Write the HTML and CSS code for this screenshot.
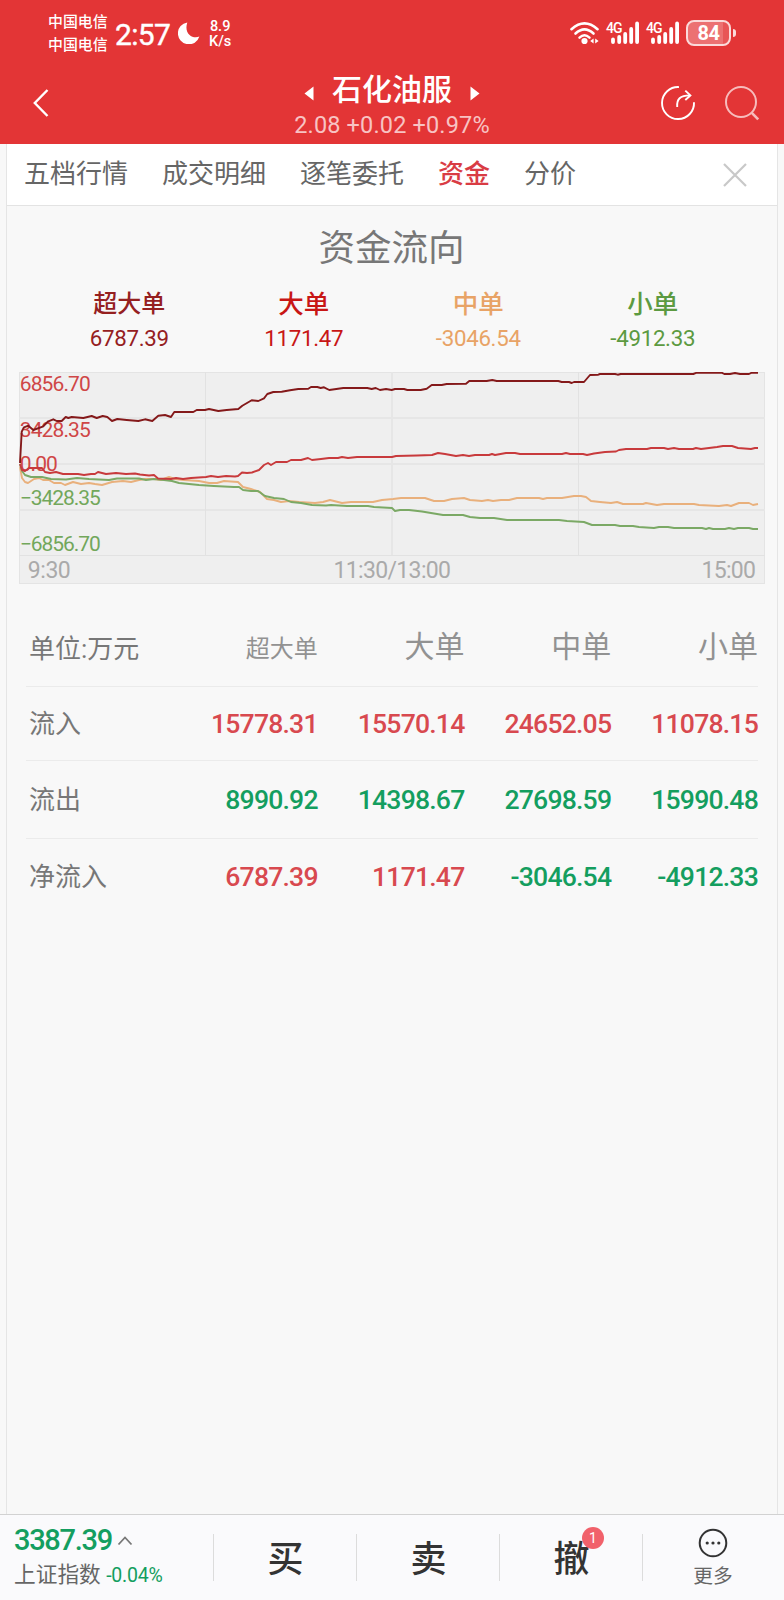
FILE: index.html
```html
<!DOCTYPE html>
<html lang="zh-CN">
<head>
  <meta charset="UTF-8">
  <title>石化油服 | 资金流向</title>
  <meta name="viewport" content="width=device-width, initial-scale=1.0">
  <link rel="stylesheet" href="styles.css">
</head>

<body>

<header>
  <div class="status-bar">
    <div class="carriers"><span>中国电信</span><span>中国电信</span></div>
    <div class="clock">2:57</div>
    <svg class="moon" width="22" height="22" viewBox="0 0 22 22"><path d="M9.3 0.4 A11 11 0 1 0 21.4 14.6 C15 17.5 5.5 12 9.3 0.4Z" fill="#fff"/></svg>
    <div class="net-speed"><span>8.9</span><span>K/s</span></div>

    <div class="status-right">
      <svg width="32" height="24" viewBox="0 0 32 24" fill="none" stroke="#fff" stroke-linecap="round">
        <path d="M2.5 8.2 Q15.5 -3.5 28.5 8.2" stroke-width="2.6"/>
        <path d="M6.5 12.5 Q15.5 4.2 24.5 12.5" stroke-width="2.6"/>
        <path d="M10.5 16.6 Q15.5 12 20.5 16.6" stroke-width="2.5"/>
        <circle cx="15.5" cy="20" r="3.1" fill="#fff" stroke="none"/>
        <path d="M24.6 17.6v5l-3.4-2.5zM26.2 17.6v5l3.4-2.5z" fill="#fff" stroke="none"/>
      </svg>
      <div class="signal">
        <span>4G</span>
        <svg width="28" height="24" viewBox="0 0 28 24" stroke="#fff" stroke-width="3.8" stroke-linecap="round"><path d="M2 18.5V21M8.2 16V21M14.2 13V21M20.2 8V21M26.1 2.5V21"/></svg>
      </div>
      <div class="signal">
        <span>4G</span>
        <svg width="28" height="24" viewBox="0 0 28 24" stroke="#fff" stroke-width="3.8" stroke-linecap="round"><path d="M2 18.5V21M8.2 16V21M14.2 13V21M20.2 8V21M26.1 2.5V21"/></svg>
      </div>
      <div class="battery"><span>84</span></div>
      <div class="battery-tip"></div>
    </div>
  </div>

  <div class="title-bar">
    <svg class="back" width="20" height="32" viewBox="0 0 20 32" fill="none" stroke="#fff" stroke-width="2.4"><path d="M16.5 3 L3.8 16 L16.5 29"/></svg>
    <div class="stock">
      <div class="stock-name">
        <svg width="10" height="15" viewBox="0 0 10 15"><path d="M9.5 0.5V14.5L0.5 7.5Z" fill="#fff"/></svg>
        <h1>石化油服</h1>
        <svg width="10" height="15" viewBox="0 0 10 15"><path d="M0.5 0.5V14.5L9.5 7.5Z" fill="#fff"/></svg>
      </div>
      <div class="stock-price">2.08 +0.02 +0.97%</div>
    </div>
    <div class="title-icons">
      <svg width="36" height="36" viewBox="0 0 36 36" fill="none" stroke="#fff" stroke-width="1.9">
        <path d="M19 2.1 A16 16 0 1 0 34 17.2"/>
        <path d="M17.2 22 C16.5 14 20 10.5 30 10.4"/>
        <path d="M25.3 5.6 L30.4 10.4 L25.3 15"/>
      </svg>
      <svg width="36" height="36" viewBox="0 0 36 36" fill="none" stroke="#f7bcbc" stroke-width="2">
        <circle cx="17" cy="17" r="15"/>
        <path d="M27.8 27.8 L34.2 34.4" stroke-width="2.6"/>
      </svg>
    </div>
  </div>
</header>

<main>

  <nav class="tabs">
    <a>五档行情</a>
    <a>成交明细</a>
    <a>逐笔委托</a>
    <a class="active">资金</a>
    <a>分价</a>
    <svg class="close" width="24" height="24" viewBox="0 0 24 24" stroke="#c8c8c8" stroke-width="2.2"><path d="M1 1L23 23M23 1L1 23"/></svg>
  </nav>

  <h2>资金流向</h2>

  <div class="legend">
    <div class="legend-item super"><b>超大单</b><span>6787.39</span></div>
    <div class="legend-item big"><b>大单</b><span>1171.47</span></div>
    <div class="legend-item middle"><b>中单</b><span>-3046.54</span></div>
    <div class="legend-item small"><b>小单</b><span>-4912.33</span></div>
  </div>

  <svg class="chart" width="746" height="212" viewBox="0 0 746 212">
    <rect x="0.5" y="0.5" width="745" height="211" fill="#efefef" stroke="#e4e4e4"/>
    <!-- grid -->
    <path d="M0 46H746M0 92H746M0 138H746M373 0V183" stroke="#e6e6e6" stroke-width="2"/>
    <path d="M0 183.5H746M186.5 0V183M559.5 0V183" stroke="#e2e2e2"/>

    <g class="up">
      <text x="0.8" y="18.8" textLength="71">6856.70</text>
      <text x="0.8" y="65" textLength="71">3428.35</text>
      <text x="0.8" y="99" textLength="38">0.00</text>
    </g>
    <g class="down">
      <text x="0.8" y="133" textLength="81">−3428.35</text>
      <text x="0.8" y="179" textLength="81">−6856.70</text>
    </g>
    <g class="time">
      <text x="8.8" y="206" textLength="43">9:30</text>
      <text x="314.5" y="206" textLength="117.5">11:30/13:00</text>
      <text x="682.5" y="206" textLength="54.5">15:00</text>
    </g>

    <!-- middle -->
    <polyline stroke="#e9b07c" points="1,95 3,106 6,110 9,111 15,107 20,106 24,108 30,108 35,111 42,111 46,113 54,110 62,112 70,111 76,112 83,113 93,110 104,109 112,110 120,108 126,107 135,107 142,108 150,105 156,107 165,108 180,109 190,111 198,111 205,109 219,110 224,115 232,117 241,120 248,127 255,128 262,130 270,129 280,130 296,131 304,130 311,128 323,131 332,130 354,130 363,128 374,127 382,126 406,126 415,129 425,129 433,127 445,126 451,128 463,129 469,128 474,129 482,128 490,128 498,126 520,126 524,127 528,126 543,126 555,124 562,124 567,125 572,129 581,130 592,131 598,130 604,132 624,132 627,131 638,133 645,132 675,132 680,133 700,134 708,133 712,134 720,131 730,131 734,133 739,132"/>
    <!-- small -->
    <polyline stroke="#7ba965" points="1,92 3,99 6,103 12,105 23,105 32,107 47,107.5 58,106 70,107 90,108 98,106.5 120,106.5 127,108 135,107 145,108 153,109 160,111 170,112 180,113 195,114 215,115 220,115 224,118 232,119 239,119 246,124 255,126 265,127 272,130 282,131 293,133 307,133.5 312,133 328,134 349,134 355,135 373,136 376,139 381,138 390,138 403,139.5 412,141 424,143 444,143 451,145 461,146 475,146 488,148 540,148 548,149 565,150 573,153 596,153 601,154 614,154 620,155 635,156 640,155 649,155 655,156 683,156 687,157 690,156 694,157 706,157 710,156 715,157 719,156 730,156 734,157 739,157"/>
    <!-- big -->
    <polyline stroke="#c83a3c" points="1,92 3,98 6,99 10,96 23,96 26,100 31,101 37,100 44,102 53,102 59,102 65,103 72,102 76,102 79,100 87,102 97,101 107,102 116,101.5 121,102.5 130,103.5 135,103 139,106.5 152,107 157,106 164,107 172,106 187,105 192,104 199,105 207,104 216,104.5 219,104 223,100.5 228,101 233,100.5 240,98 245,93 249,91 252,93 257,90 268,90 272,88 282,88 289,86 293,88 302,87 310,86 319,86 323,85 329,86 338,85 373,85 377,84 398,83.5 413,83 419,81 426,82 437,84 444,83 450,84 456,83 470,83 473,82 476,83 487,81 496,81 501,82 543,82 547,81 551,82 564,82 568,83 575,81.5 586,80 597,79.5 600,78 607,77 628,77 632,76 645,76 649,77 655,76 660,77 674,77 677,76 682,77 690,76 698,75 704,74 713,74 719,76 732,77 736,76 739,76"/>
    <!-- super -->
    <polyline stroke="#84191a" points="1,91 2.7,59.7 5,55.3 9.3,53.7 14.3,58 23.7,54.7 29.3,49.3 34.3,47.3 37.7,49 42.7,49 46.7,45 49.3,46 52.7,45 64.3,46 72.7,44 77.7,46 83.7,44 88.3,45 93,49 98.3,47 107.7,48 119.3,49 126,47.3 133.3,49 139.3,43.7 146,43 152,45 155.3,40 174.3,40 177.7,38 186,38 190,37 199.3,39 207.7,38 219.3,37 223.3,33.7 232.7,28.3 239.3,29 245,26.3 248.3,22 254.3,20 262.7,19.7 271,18.3 279.3,17 289.3,16.7 292,15 298.3,15 301.7,16 305,15.3 310.3,18 324.3,16 348.3,16 352.7,17 356.7,16 361,18 367,17 372.7,18 376,17 385,17 388.3,18 401.7,18 407.7,16.7 412.7,13 422.7,13 427.7,12 447,11.7 450.3,9 467.7,9 473.3,8 477.7,9 539.3,9 542.7,10 550,10 552.7,11 555,10 565,10 571,3 579.3,2.7 581,2 596,2 598.7,2.7 601.7,2 674.3,2 677.7,0.7 702.7,0.7 705.3,2 711,2 716,1 721,2 730,2 732.7,0.7 739,0.7"/>
  </svg>

  <table>
    <tr class="head-row"><th>单位:万元</th><td class="first">超大单</td><td>大单</td><td>中单</td><td>小单</td></tr>
    <tr class="in-row"><th>流入</th><td class="red">15778.31</td><td class="red">15570.14</td><td class="red">24652.05</td><td class="red">11078.15</td></tr>
    <tr class="out-row"><th>流出</th><td class="green">8990.92</td><td class="green">14398.67</td><td class="green">27698.59</td><td class="green">15990.48</td></tr>
    <tr class="net-row"><th>净流入</th><td class="red">6787.39</td><td class="red">1171.47</td><td class="green">-3046.54</td><td class="green">-4912.33</td></tr>
  </table>

</main>

<footer>
  <div class="index">
    <div class="index-value">3387.39
      <svg width="16" height="11" viewBox="0 0 16 11" fill="none" stroke="#777" stroke-width="1.8"><path d="M1.5 9.5L8 2.5L14.5 9.5"/></svg>
    </div>
    <div class="index-name">上证指数 <span>-0.04%</span></div>
  </div>
  <div class="trade">买</div>
  <div class="trade">卖</div>
  <div class="trade">撤<i class="badge">1</i></div>
  <div class="more">
    <svg width="30" height="30" viewBox="0 0 30 30"><circle cx="15" cy="15" r="13.3" fill="none" stroke="#333" stroke-width="2"/><g fill="#333"><circle cx="9.2" cy="15" r="1.6"/><circle cx="15" cy="15" r="1.6"/><circle cx="20.8" cy="15" r="1.6"/></g></svg>
    <span>更多</span>
  </div>
</footer>

</body>
</html>
```
FILE: styles.css
```css
* {
  box-sizing: border-box;
}
body {
  font-family: Roboto, 'Noto Sans CJK SC', sans-serif;
  background: #f8f8f8;
  margin: 0;
  height: 1600px;
  display: flex;
  flex-direction: column;
  overflow: hidden;
  color: #666;
}
svg {
  display: block;
  flex: none;
}

/* header */
header {
  background: #e33536;
  height: 144px;
  color: #fff;
}
.status-bar {
  display: flex;
  align-items: flex-start;
  height: 66px;
  padding: 10px 48px 0 48px;
}
.carriers {
  display: flex;
  flex-direction: column;
  width: 67px;
  padding-top: 1px;
  font-size: 14.9px;
  font-weight: 500;
  line-height: 23px;
}
.clock {
  width: 63px;
  font-size: 30px;
  font-weight: 400;
  line-height: 49px;
  letter-spacing: -0.7px;
  -webkit-text-stroke: 0.4px #fff;
}
.moon {
  margin-top: 12px;
}
.net-speed {
  display: flex;
  flex-direction: column;
  align-items: center;
  margin: 9px 0 0 9px;
  font-size: 14.5px;
  font-weight: 500;
  line-height: 15px;
}
.status-right {
  display: flex;
  margin: 10px 0 0 auto;
}
.status-right > svg {
  margin-top: 1px;
}
.signal {
  position: relative;
  width: 28px;
  margin: 1px 0 0 10px;
}
.signal + .signal {
  margin-left: 12px;
}
.signal span {
  position: absolute;
  left: -5px;
  top: 0;
  font-size: 14px;
  font-weight: 500;
  line-height: 14px;
  letter-spacing: -1px;
}
.battery {
  width: 45px;
  height: 26px;
  margin-left: 7px;
  border: 2px solid #fbdada;
  border-radius: 8px;
  background: linear-gradient(90deg, #ec7172 86%, #e85556 86%);
  font-size: 20px;
  font-weight: 700;
  line-height: 23px;
  letter-spacing: -0.5px;
  text-align: center;
}
.battery-tip {
  width: 3px;
  height: 8px;
  margin: 9px 0 0 2px;
  border-radius: 0 3px 3px 0;
  background: #fbdada;
}
.title-bar {
  display: flex;
  position: relative;
  justify-content: center;
}
.back {
  position: absolute;
  left: 31px;
  top: 21px;
}
.stock-name {
  display: flex;
  align-items: center;
  justify-content: center;
  gap: 16px;
  height: 45px;
}
.stock-name svg {
  margin-top: 10px;
}
h1 {
  margin: 2px 0 0;
  font-size: 30px;
  font-weight: 500;
  line-height: 44px;
  width: 124px;
  text-align: center;
}
.stock-price {
  font-size: 23.5px;
  line-height: 28px;
  letter-spacing: 0.15px;
  color: #f8c3c3;
  text-align: center;
}
.title-icons {
  position: absolute;
  display: flex;
  gap: 28px;
  right: 24px;
  top: 19px;
}

/* panel */
main {
  flex: 1;
  margin: 0 6px;
  border: 1px solid #e5e5e5;
  border-width: 0 1px;
}
.tabs {
  display: flex;
  align-items: center;
  gap: 34px;
  height: 62px;
  padding: 0 30px 1px 17px;
  background: #fff;
  border-bottom: 1px solid #e3e3e3;
  font-size: 26px;
  line-height: 38px;
}
.tabs .active {
  color: #d93c44;
  font-weight: 500;
}
.close {
  margin: 2px 0 0 auto;
}
h2 {
  margin: 16px 0 0;
  padding-right: 1px;
  font-size: 36.5px;
  font-weight: 400;
  line-height: 54px;
  color: #777;
  text-align: center;
}
.legend {
  display: flex;
  margin: 9px 37px 0 35px;
  text-align: center;
}
.legend-item {
  flex: 1;
  height: 87px;
}
.legend-item b {
  display: block;
  font-size: 25.5px;
  font-weight: 500;
  line-height: 38px;
}
.legend-item span {
  display: block;
  font-size: 22.3px;
  line-height: 30px;
  letter-spacing: -0.3px;
}
.super b {
  font-size: 24px;
}
.super {
  color: #95201f;
}
.big {
  color: #c81615;
}
.middle {
  color: #e8a366;
}
.small {
  color: #5c9a41;
}
.chart {
  margin-left: 12px;
}
.chart polyline {
  fill: none;
  stroke-width: 1.9;
  stroke-linejoin: round;
}
.chart text {
  font-size: 21px;
}
.up {
  fill: #cf4646;
}
.down {
  fill: #72a75b;
}
.chart .time text {
  font-size: 23px;
  fill: #aaa;
}

/* table */
table {
  width: 732px;
  margin: 27px 0 0 19px;
  border-collapse: collapse;
  table-layout: fixed;
}
th, td {
  padding: 0;
  text-align: right;
  font-weight: 500;
  font-size: 26.6px;
  letter-spacing: -0.8px;
  border-bottom: 1px solid #ebebeb;
}
th {
  width: 145px;
  padding: 0 0 3px 3px;
  text-align: left;
  font-size: 26px;
  font-weight: 400;
  letter-spacing: 0;
  color: #777;
}
.head-row {
  height: 75px;
}
.head-row th {
  padding-bottom: 4px;
}
.head-row td {
  padding-bottom: 9px;
  font-size: 30px;
  font-weight: 400;
  letter-spacing: 0;
  color: #929292;
}
.head-row .first {
  padding: 0 0 3px;
  font-size: 24px;
}
.in-row {
  height: 74px;
}
.in-row td, .out-row td {
  padding-top: 1px;
}
.out-row {
  height: 78px;
}
.net-row {
  height: 75px;
}
.net-row th, .net-row td {
  border: none;
}
.net-row td {
  padding-top: 2px;
}
.red {
  color: #d8494f;
}
.green {
  color: #149e5f;
}

/* bottom bar */
footer {
  display: flex;
  align-items: flex-start;
  height: 86px;
  background: #fafafc;
  border-top: 1px solid #d2d2d2;
}
.index {
  width: 213px;
  padding: 6px 0 0 14px;
}
.index-value {
  display: flex;
  align-items: center;
  gap: 5px;
  font-size: 29px;
  font-weight: 500;
  line-height: 38px;
  letter-spacing: -1.3px;
  color: #149e5f;
}
.index-name {
  font-size: 21.7px;
  line-height: 32px;
  white-space: nowrap;
}
.index-name span {
  font-size: 19.5px;
  letter-spacing: -0.2px;
  color: #149e5f;
}
.trade, .more {
  height: 47px;
  margin-top: 19px;
  border-left: 1px solid #dcdcdc;
}
.trade {
  position: relative;
  width: 143px;
  padding-left: 1px;
  font-size: 36px;
  font-weight: 500;
  line-height: 53px;
  text-align: center;
  color: #333;
}
.badge {
  position: absolute;
  left: 82px;
  top: -7px;
  width: 22px;
  height: 22px;
  border-radius: 50%;
  background: #f1616b;
  color: #fff;
  font-size: 14px;
  font-style: normal;
  font-weight: 400;
  line-height: 22px;
}
.more {
  display: flex;
  flex: 1;
  flex-direction: column;
  align-items: center;
  padding-right: 1px;
  font-size: 19.7px;
  line-height: 28px;
}
.more svg {
  margin-top: -6px;
}
.more span {
  margin-top: 5px;
}
```
